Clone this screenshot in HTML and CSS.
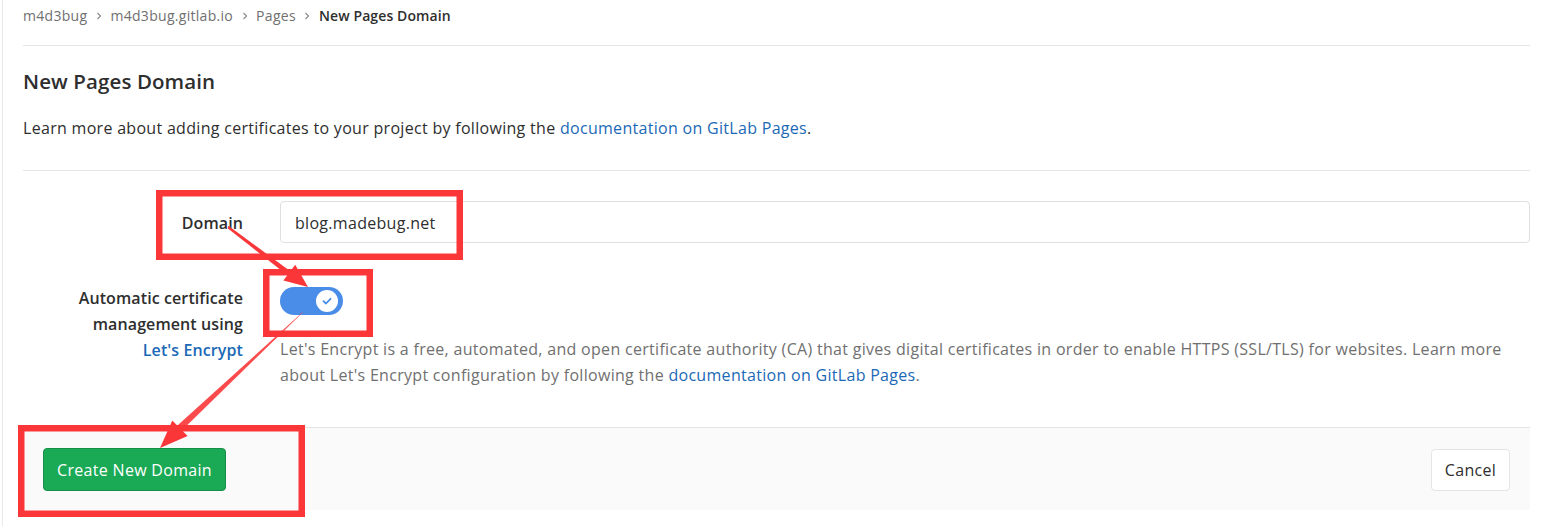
FILE: index.html
```html
<!DOCTYPE html>
<html lang="en">
<head>
<meta charset="utf-8">
<title>New Pages Domain</title>
<link rel="stylesheet" href="styles.css">
</head>
<body>
<div class="page">
  <nav class="breadcrumb">
    <a class="crumb" href="#">m4d3bug</a>
    <svg class="sep" viewBox="0 0 8 8" width="8" height="8"><path d="M2.5 1 L5.5 4 L2.5 7" fill="none" stroke="#8c8c8c" stroke-width="1.2"/></svg>
    <a class="crumb" href="#">m4d3bug.gitlab.io</a>
    <svg class="sep" viewBox="0 0 8 8" width="8" height="8"><path d="M2.5 1 L5.5 4 L2.5 7" fill="none" stroke="#8c8c8c" stroke-width="1.2"/></svg>
    <a class="crumb" href="#">Pages</a>
    <svg class="sep" viewBox="0 0 8 8" width="8" height="8"><path d="M2.5 1 L5.5 4 L2.5 7" fill="none" stroke="#8c8c8c" stroke-width="1.2"/></svg>
    <span class="crumb current">New Pages Domain</span>
  </nav>

  <h3 class="title">New Pages Domain</h3>
  <p class="intro">Learn more about adding certificates to your project by following the <a href="#">documentation on GitLab Pages</a>.</p>
  <hr class="divider">

  <form class="form">
    <div class="row">
      <label class="label">Domain</label>
      <div class="field">
        <input class="input" type="text" value="blog.madebug.net">
      </div>
    </div>
    <div class="row row-toggle">
      <label class="label label-wrap">Automatic certificate management using <a href="#">Let's Encrypt</a></label>
      <div class="field">
        <span class="toggle">
          <span class="knob">
            <svg viewBox="0 0 12 12" width="12" height="12"><path d="M2.5 6.2 L5 8.5 L9.5 3.8" fill="none" stroke="#4a8de8" stroke-width="1.8" stroke-linecap="round" stroke-linejoin="round"/></svg>
          </span>
        </span>
        <p class="help">Let's Encrypt is a free, automated, and open certificate authority (CA) that gives digital certificates in order to enable HTTPS (SSL/TLS) for websites. Learn more about Let's Encrypt configuration by following the <a href="#">documentation on GitLab Pages</a>.</p>
      </div>
    </div>
    <div class="actions">
      <button type="button" class="btn btn-success">Create New Domain</button>
      <button type="button" class="btn btn-cancel">Cancel</button>
    </div>
  </form>
</div>

<svg class="annotations" width="1542" height="526" viewBox="0 0 1542 526">
  <g fill="none" stroke="#fb3639" stroke-width="6.5">
    <rect x="159.25" y="193.25" width="300.5" height="63.5"/>
    <rect x="266.25" y="272.25" width="103.5" height="61.5"/>
    <rect x="21.25" y="428.25" width="280.5" height="85.5"/>
  </g>
  <g fill="#fb3639">
    <polygon points="228.4,225.7 227.6,228.3 289.4,276.8 292.4,272.8"/>
    <polygon points="308,287 283.4,280.6 295.2,264.8"/>
    <polygon points="303.3,311.6 302.7,312.4 180.2,432 176.6,426.2" opacity="0.9"/>
    <polygon points="160,448 172.3,420.4 187.6,436"/>
  </g>
</svg>
</body>
</html>
```

FILE: styles.css
```css
* { box-sizing: border-box; }

html, body {
  margin: 0;
  padding: 0;
  background: #fff;
}

body {
  font-family: "Open Sans", "Noto Sans", "Liberation Sans", sans-serif;
  color: #2e2e2e;
  font-size: 16px;
  letter-spacing: 0.3px;
  position: relative;
  width: 1542px;
  height: 526px;
  overflow: hidden;
}

a { color: #1b69b6; text-decoration: none; }

.page {
  margin-left: 2px;
  border-left: 1px solid #e8e8e8;
  padding: 0 12px 0 20px;
  height: 526px;
}

.breadcrumb {
  display: flex;
  align-items: center;
  height: 46px;
  padding-bottom: 14px;
  border-bottom: 1px solid #e5e5e5;
  font-size: 14px;
  letter-spacing: 0.3px;
}

.crumb { color: #707070; }
.crumb.current { color: #2e2e2e; font-weight: 600; letter-spacing: 0.1px; }

.sep { margin: 0 7.5px; }

.title {
  margin: 21px 0 0;
  font-size: 20.5px;
  line-height: 28px;
  font-weight: 600;
  letter-spacing: 0.1px;
}

.intro {
  margin: 21px 0 0;
  line-height: 24px;
}

.divider {
  margin: 30px 0 0;
  border: 0;
  border-top: 1px solid #e5e5e5;
  height: 0;
}

.form { margin: 0; }

.row {
  display: grid;
  grid-template-columns: 220px 1fr;
  column-gap: 37px;
  align-items: start;
}

.row:first-child { margin-top: 30px; }

.label {
  text-align: right;
  font-weight: 600;
  line-height: 26px;
  letter-spacing: 0.1px;
}

.label-wrap { padding-left: 48px; }

.row:first-child .label { line-height: 44px; }

.input {
  display: block;
  width: 100%;
  height: 42px;
  border: 1px solid #dfdfdf;
  border-radius: 4px;
  padding: 2px 14px 0;
  font: inherit;
  letter-spacing: 0.3px;
  color: #2e2e2e;
  background: #fff;
  outline: none;
}

.row-toggle { margin-top: 40px; }

.toggle {
  display: flex;
  align-items: center;
  justify-content: flex-end;
  width: 63px;
  height: 28px;
  margin-top: 2px;
  padding-right: 5px;
  border-radius: 14px;
  background: #4a8de8;
}

.knob {
  display: flex;
  align-items: center;
  justify-content: center;
  width: 22px;
  height: 22px;
  border-radius: 50%;
  background: #fff;
}

.help {
  margin: 21px 0 0;
  color: #707070;
  line-height: 26px;
}

.actions {
  display: flex;
  justify-content: space-between;
  align-items: center;
  margin-top: 39px;
  padding: 20px 20px 19px;
  background: #fafafa;
  border-top: 1px solid #e5e5e5;
}

.btn {
  font: inherit;
  letter-spacing: 0.3px;
  height: 43px;
  border-radius: 4px;
  padding: 0 10px;
  cursor: pointer;
}

.btn-success {
  width: 183px;
  background: #1aaa55;
  border: 1px solid #168f48;
  color: #fff;
}

.btn-cancel {
  width: 79px;
  height: 42px;
  background: #fff;
  border: 1px solid #e5e5e5;
  color: #2e2e2e;
}

.annotations {
  position: absolute;
  top: 0;
  left: 0;
  pointer-events: none;
}
```
